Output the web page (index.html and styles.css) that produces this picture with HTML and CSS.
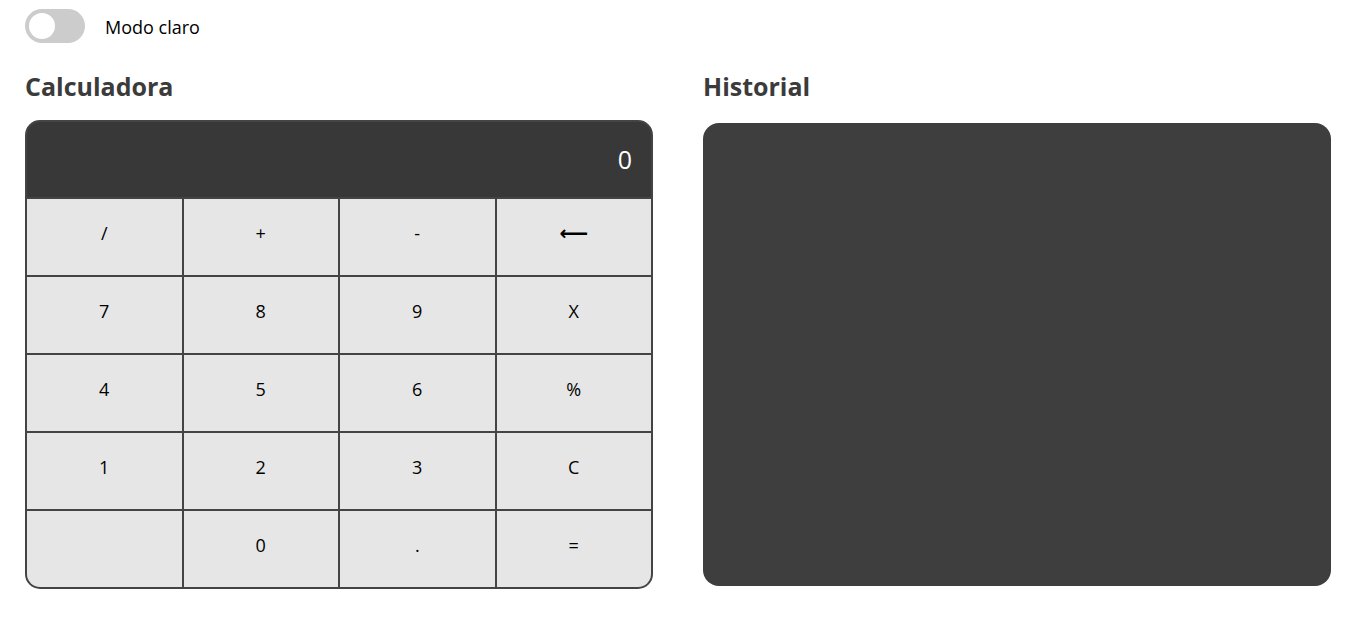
FILE: index.html
```html
<!DOCTYPE html>
<html lang="es">
<head>
<meta charset="utf-8">
<title>Calculadora</title>
<link rel="stylesheet" href="styles.css">
</head>
<body>
<div class="topbar">
  <label class="switch"><span class="knob"></span></label>
  <span class="mode-label">Modo claro</span>
</div>
<main class="layout">
  <section class="panel">
    <h2 class="title">Calculadora</h2>
    <div class="calc">
      <div class="display">0</div>
      <div class="keys">
        <button class="key">/</button>
        <button class="key">+</button>
        <button class="key">-</button>
        <button class="key arrow">&#x27F5;</button>
        <button class="key">7</button>
        <button class="key">8</button>
        <button class="key">9</button>
        <button class="key">X</button>
        <button class="key">4</button>
        <button class="key">5</button>
        <button class="key">6</button>
        <button class="key">%</button>
        <button class="key">1</button>
        <button class="key">2</button>
        <button class="key">3</button>
        <button class="key">C</button>
        <button class="key"></button>
        <button class="key">0</button>
        <button class="key">.</button>
        <button class="key">=</button>
      </div>
    </div>
  </section>
  <section class="panel">
    <h2 class="title">Historial</h2>
    <div class="history"></div>
  </section>
</main>
</body>
</html>
```
FILE: styles.css
```css
* { box-sizing: border-box; }
body {
  margin: 0;
  padding: 9px 18px 0 25px;
  font-family: "Open Sans", "Noto Sans", sans-serif;
  background: #fff;
  color: #000;
}
.topbar {
  display: flex;
  align-items: center;
  gap: 20px;
  height: 34px;
}
.switch {
  display: block;
  width: 60px;
  height: 34px;
  border-radius: 17px;
  background: #cccccc;
  padding: 4px;
}
.knob {
  display: block;
  width: 26px;
  height: 26px;
  border-radius: 50%;
  background: #fff;
}
.mode-label {
  font-size: 18px;
  line-height: 24px;
  color: #000;
  padding-top: 2px;
}
.layout {
  display: flex;
  gap: 50px;
  margin-top: 27px;
}
.panel {
  width: 628px;
}
.title {
  margin: 0 0 17px;
  font-size: 25px;
  font-weight: 700;
  line-height: 33px;
  color: #3b3b3b;
}
.calc {
  border: 2px solid #444;
  border-radius: 15px;
  overflow: hidden;
  background: #444;
}
.display {
  height: 75px;
  background: #383838;
  color: #fff;
  font-size: 25px;
  text-align: right;
  padding: 21px 19px 0 0;
  line-height: 32px;
}
.keys {
  display: grid;
  grid-template-columns: repeat(4, 1fr);
  gap: 2px;
  padding-top: 2px;
}
.key {
  height: 76px;
  border: none;
  background: #e6e6e6;
  font-family: "Open Sans", "Noto Sans", sans-serif;
  font-size: 18px;
  color: #000;
  padding: 0 0 8px;
}
.key.arrow {
  font-family: "DejaVu Sans", sans-serif;
  font-size: 20px;
  font-weight: 700;
}
.history {
  height: 463px;
  margin-top: 20px;
  background: #3e3e3e;
  border-radius: 16px;
}
```
